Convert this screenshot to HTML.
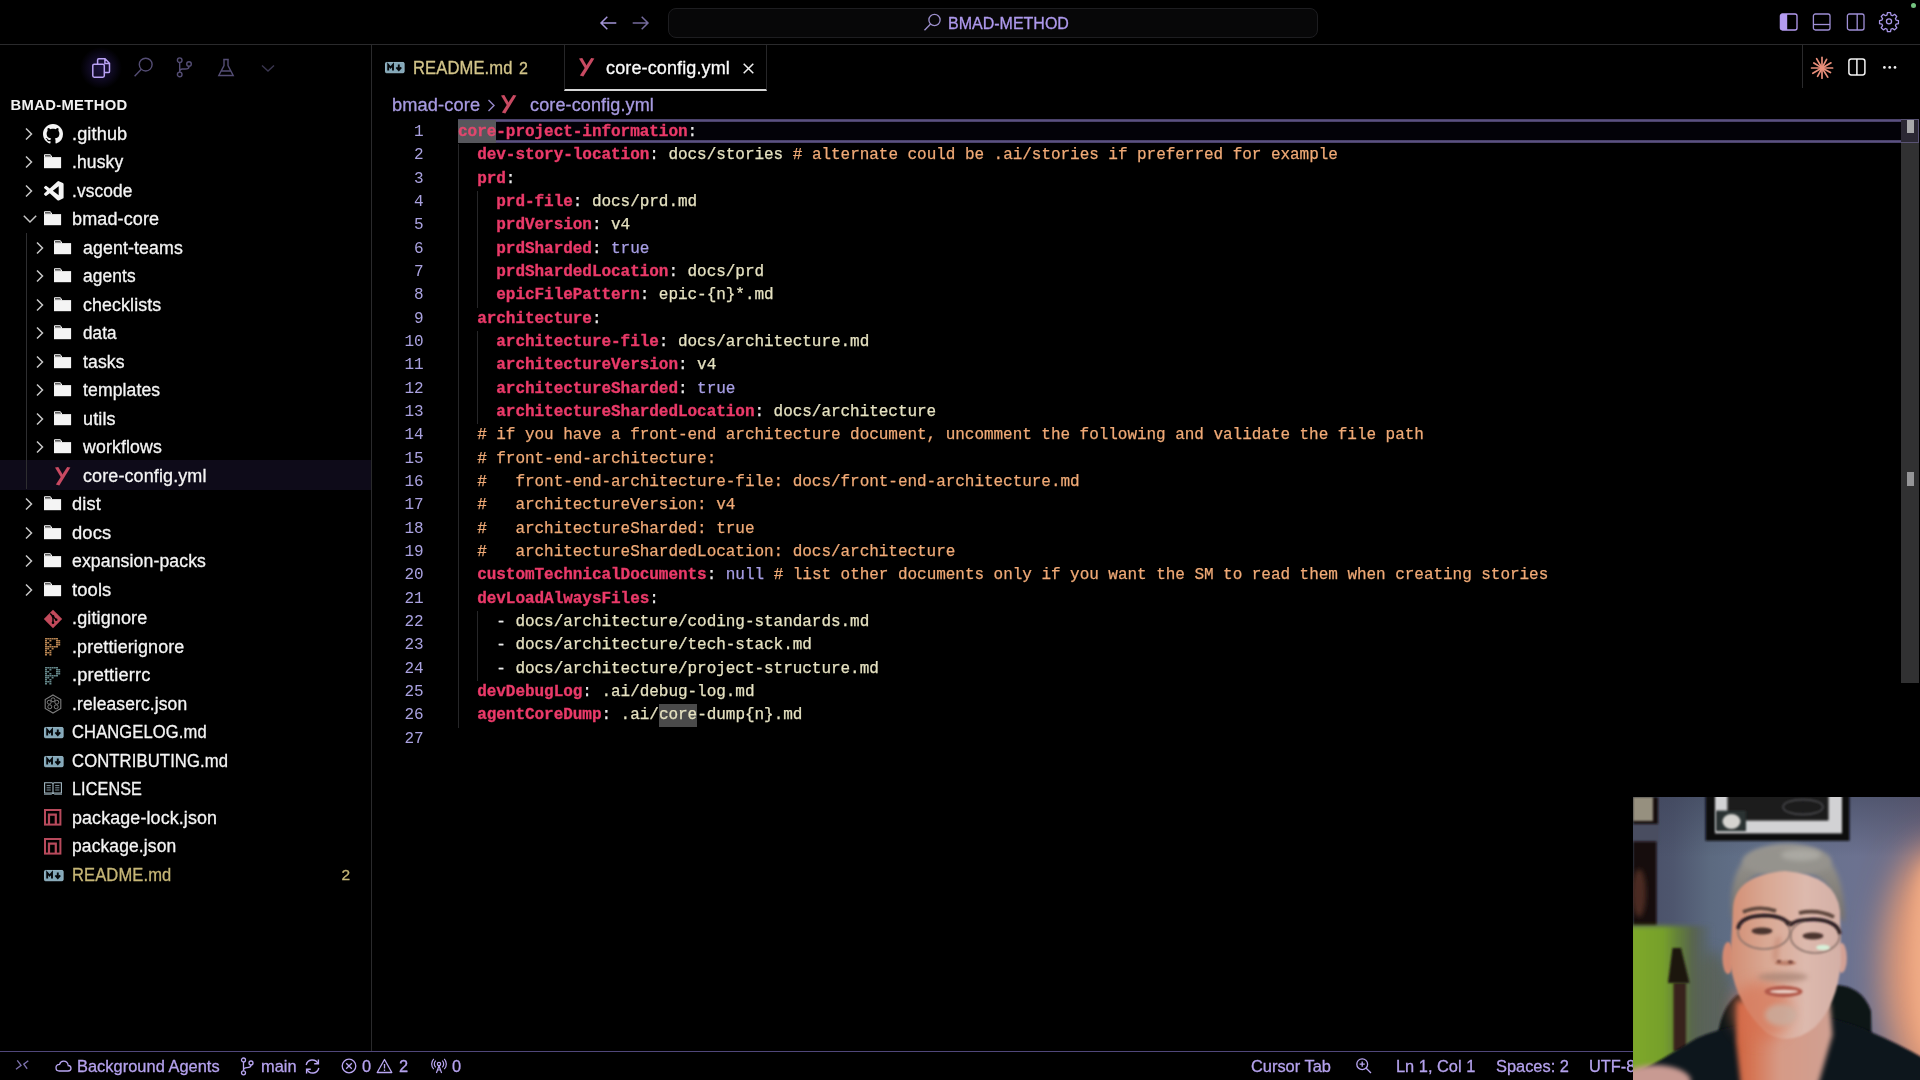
<!DOCTYPE html>
<html>
<head>
<meta charset="utf-8">
<title>core-config.yml - BMAD-METHOD</title>
<style>
*{margin:0;padding:0;box-sizing:border-box}
html,body{width:1920px;height:1080px;overflow:hidden;background:#000;font-family:"Liberation Sans",sans-serif;color:#fff}
.abs{position:absolute}
svg{position:absolute;overflow:visible}
#titlebar{position:absolute;left:0;top:0;width:1920px;height:45px;border-bottom:1px solid #2a2a2c;background:#000}
#search{position:absolute;left:668px;top:8px;width:650px;height:30px;border:1px solid #1d1d20;border-radius:8px;background:#070708}
#search span{position:absolute;left:279px;top:5.8px;font-size:16px;line-height:18px;color:#ae99ec;white-space:nowrap;-webkit-text-stroke:0.3px currentColor}
#sidebar{position:absolute;left:0;top:45px;width:372px;height:1006px;border-right:1px solid #2a2a2c;background:#000}
#sbtitle{position:absolute;left:10.5px;top:52px;font-size:14.8px;line-height:16px;font-weight:bold;color:#f2f2f2;letter-spacing:0.33px;white-space:nowrap}
#tree{position:absolute;left:0;top:0;width:371px;height:0}
.row{position:absolute;left:0;width:371px;height:28.5px;font-size:17.6px;line-height:28.5px;color:#f4f4f4;white-space:nowrap;letter-spacing:0.12px}
.row .lbl{position:absolute;top:0;display:inline-block;transform-origin:0 50%;-webkit-text-stroke:0.3px currentColor}
.row.sel{background:none}
#tabs{position:absolute;left:372px;top:45px;width:1548px;height:46px}
.tab{position:absolute;top:0;height:46px;font-size:17.6px;line-height:47px;white-space:nowrap;letter-spacing:0.12px}
.t{display:inline-block;transform-origin:0 50%;-webkit-text-stroke:0.3px currentColor}
#crumbs{position:absolute;left:372px;top:92px;width:1200px;height:26px;font-size:17.6px;line-height:27px;color:#a79ae0;white-space:nowrap;letter-spacing:0.12px}
#crumbs span{position:absolute;top:0}
#editor{position:absolute;left:372px;top:120.9px;width:1548px;height:932px;font-family:"Liberation Mono",monospace;font-size:16px}
.ln{position:absolute;left:0;width:51.5px;text-align:right;height:23.33px;line-height:23.33px;color:#aaa2e0;font-size:16px;white-space:pre;letter-spacing:-0.04px}
.cl{position:absolute;left:86px;height:23.33px;line-height:23.33px;white-space:pre;color:#e6e2c1;letter-spacing:-0.039px;-webkit-text-stroke:0.25px currentColor}
.cl .k{-webkit-text-stroke:0.35px currentColor}
.k{color:#ea3a69;font-weight:bold}
.p{color:#ececec}
.c{color:#f0aa76}
.b{color:#a79ee4}
.hl{background:#57575c;color:#e2486e;display:inline-block;height:23.2px;margin-top:-1.5px;padding-top:1.5px;vertical-align:top}
.hl2{background:#4a4a4a;display:inline-block;height:23px;vertical-align:top}
#curline{left:86px;top:-1.3px;width:1443px;height:23.3px;border-top:2px solid #564c76;border-bottom:2px solid #564c76;background:#030208}
#status{position:absolute;left:0;top:1051px;width:1920px;height:29px;border-top:1px solid #50477a;background:#000;font-size:16.4px;color:#b5a2ee;line-height:28px;white-space:nowrap;-webkit-text-stroke:0.3px currentColor}
#status span{position:absolute;top:0}
#tree,#editor,#tabs,#crumbs,#status,#titlebar,#sidebar{will-change:transform}
#titlebar,#sidebar,#status{background:transparent}

</style>
</head>
<body>
<div id="titlebar">
<svg style="left:598.6px;top:13.8px" width="18" height="18" viewBox="0 0 18 18"><path d="M17.3 9 H2 M8.3 2.7 L2 9 L8.3 15.3" fill="none" stroke="#a394d8" stroke-width="1.5"/></svg>
<svg style="left:632.4px;top:13.8px" width="18" height="18" viewBox="0 0 18 18"><path d="M0.7 9 H16 M9.7 2.7 L16 9 L9.7 15.3" fill="none" stroke="#746a9c" stroke-width="1.5"/></svg>
<div id="search">
<svg style="left:254px;top:3.4px" width="20" height="20" viewBox="0 0 20 20"><circle cx="11.5" cy="8" r="5.6" fill="none" stroke="#9c8fcc" stroke-width="1.3"/><path d="M7.6 12 L1.5 18.2" stroke="#9c8fcc" stroke-width="1.3"/></svg>
<span>BMAD-METHOD</span></div>
<svg style="left:1779px;top:13px" width="20" height="18" viewBox="0 0 20 18"><rect x="1.4" y="1" width="16.6" height="16" rx="2" fill="none" stroke="#b59cf2" stroke-width="1.3"/><path d="M3 1 H8.2 V17 H3 Q1.4 17 1.4 15.4 V2.6 Q1.4 1 3 1 Z" fill="#b59cf2"/></svg>
<svg style="left:1812px;top:13px" width="20" height="18" viewBox="0 0 20 18"><rect x="1.4" y="1" width="16.6" height="16" rx="2" fill="none" stroke="#9f8fd6" stroke-width="1.3"/><path d="M1.4 11.5 H18" stroke="#9f8fd6" stroke-width="1.3"/></svg>
<svg style="left:1846px;top:13px" width="20" height="18" viewBox="0 0 20 18"><rect x="1.4" y="1" width="16.6" height="16" rx="2" fill="none" stroke="#9f8fd6" stroke-width="1.3"/><path d="M11.2 1 V17" stroke="#9f8fd6" stroke-width="1.3"/></svg>
<svg style="left:1878px;top:11px" width="22" height="22" viewBox="0 0 24 24"><path fill="none" stroke="#a896e6" stroke-width="1.4" stroke-linejoin="round" d="M10.3 2.5h3.4l.5 2.6 1.7.7 2.2-1.5 2.4 2.4-1.5 2.2.7 1.7 2.6.5v3.4l-2.6.5-.7 1.7 1.5 2.2-2.4 2.4-2.2-1.5-1.7.7-.5 2.6h-3.4l-.5-2.6-1.7-.7-2.2 1.5-2.4-2.4 1.5-2.2-.7-1.7-2.6-.5v-3.4l2.6-.5.7-1.7-1.5-2.2 2.4-2.4 2.2 1.5 1.7-.7z" transform="translate(0,-0.7)"/><circle cx="12" cy="11.3" r="2.8" fill="none" stroke="#a896e6" stroke-width="1.4"/></svg>
<div class="abs" style="left:1911.4px;top:3.4px;width:5px;height:5px;border-radius:3px;background:#74c480"></div>

</div>
<div id="sidebar">
<div class="abs" style="left:80px;top:2px;width:42px;height:42px;border-radius:21px;background:radial-gradient(closest-side,#1c1340 0%,#120c28 45%,#06040e 80%,#000 100%)"></div>
<svg style="left:92.3px;top:12.6px" width="18.4" height="20" viewBox="0 0 18.4 20"><path d="M5.6 6 V1.9 Q5.6 0.8 6.7 0.8 H13 L17.5 5.2 V13.4 Q17.5 14.5 16.4 14.5 H12.6 M12.9 1 V5.4 H17.3" fill="none" stroke="#b9a2f5" stroke-width="1.5"/><rect x="0.8" y="6.2" width="11.5" height="13" rx="1.4" fill="none" stroke="#b9a2f5" stroke-width="1.5"/></svg>
<svg style="left:133px;top:12px" width="21" height="21" viewBox="0 0 21 21"><circle cx="12.7" cy="7.6" r="6.4" fill="none" stroke="#544d74" stroke-width="1.4"/><path d="M8.3 12.2 L1.6 19.2" stroke="#544d74" stroke-width="1.4"/></svg>
<svg style="left:176px;top:12.4px" width="17" height="21" viewBox="0 0 17 21"><circle cx="3.7" cy="3.2" r="2.3" fill="none" stroke="#544d74" stroke-width="1.4"/><circle cx="3.7" cy="17.4" r="2.3" fill="none" stroke="#544d74" stroke-width="1.4"/><circle cx="13" cy="7" r="2.3" fill="none" stroke="#544d74" stroke-width="1.4"/><path d="M3.7 5.6 V15 M13 9.4 Q13 12 9.2 12 H6.4 Q3.7 12 3.7 14.6" fill="none" stroke="#544d74" stroke-width="1.4"/></svg>
<svg style="left:217.3px;top:12.8px" width="18" height="20" viewBox="0 0 18 20"><path d="M6.2 1.5 H11.8 M7 1.5 V7.5 L1.8 17.5 H16.2 L11 7.5 V1.5 M4 13 H14" fill="none" stroke="#544d74" stroke-width="1.4"/></svg>
<svg style="left:260.5px;top:18.6px" width="14" height="9" viewBox="0 0 14 9"><path d="M1 1.5 L7 7 L13 1.5" fill="none" stroke="#3a3650" stroke-width="1.4"/></svg>

<div id="sbtitle">BMAD-METHOD</div>
</div>
<div id="tree">
<div class="abs" style="left:0;top:460.4px;width:371px;height:29.2px;background:#0e0b19"></div>
<div class="row" style="top:119.75px"><svg style="left:24.3px;top:6.85px" width="10" height="14" viewBox="0 0 10 14"><path d="M2 1.5 L7.5 7 L2 12.5" fill="none" stroke="#c8c8c8" stroke-width="1.5"/></svg><svg style="left:43.0px;top:4.25px" width="20" height="20" viewBox="0 0 16 16"><path fill="#f4f4f4" d="M8 0C3.58 0 0 3.58 0 8c0 3.54 2.29 6.53 5.47 7.59.4.07.55-.17.55-.38 0-.19-.01-.82-.01-1.49-2.01.37-2.53-.49-2.69-.94-.09-.23-.48-.94-.82-1.13-.28-.15-.68-.52-.01-.53.63-.01 1.08.58 1.23.82.72 1.21 1.87.87 2.33.66.07-.52.28-.87.51-1.07-1.78-.2-3.64-.89-3.64-3.95 0-.87.31-1.59.82-2.15-.08-.2-.36-1.02.08-2.12 0 0 .67-.21 2.2.82.64-.18 1.32-.27 2-.27s1.36.09 2 .27c1.53-1.04 2.2-.82 2.2-.82.44 1.1.16 1.92.08 2.12.51.56.82 1.27.82 2.15 0 3.07-1.87 3.75-3.65 3.95.29.25.54.73.54 1.48 0 1.07-.01 1.93-.01 2.2 0 .21.15.46.55.38A8.01 8.01 0 0 0 16 8c0-4.42-3.58-8-8-8z"/></svg><span class="lbl" style="left:72.3px;transform:scaleX(1.0307)">.github</span></div>
<div class="row" style="top:148.25px"><svg style="left:24.3px;top:6.85px" width="10" height="14" viewBox="0 0 10 14"><path d="M2 1.5 L7.5 7 L2 12.5" fill="none" stroke="#c8c8c8" stroke-width="1.5"/></svg><svg style="left:43.9px;top:5.949999999999999px" width="18" height="15" viewBox="0 0 18 15"><path d="M0.5 3 V0.7 H6.4 L7.8 3 Z" fill="#3a3a3a" stroke="#f4f4f4" stroke-width="1"/><path d="M0 3.1 H17.1 V14.2 H0 Z" fill="#f4f4f4"/></svg><span class="lbl" style="left:72.3px;transform:scaleX(0.9945)">.husky</span></div>
<div class="row" style="top:176.75px"><svg style="left:24.3px;top:6.85px" width="10" height="14" viewBox="0 0 10 14"><path d="M2 1.5 L7.5 7 L2 12.5" fill="none" stroke="#c8c8c8" stroke-width="1.5"/></svg><svg style="left:43.7px;top:4.35px" width="19.6" height="19.6" viewBox="0 0 24 24"><path fill="#f4f4f4" d="M23.15 2.587L18.21.21a1.494 1.494 0 0 0-1.705.29l-9.46 8.63-4.12-3.128a.999.999 0 0 0-1.276.057L.327 7.261A1 1 0 0 0 .326 8.74L3.899 12 .326 15.26a1 1 0 0 0 .001 1.479L1.65 17.94a.999.999 0 0 0 1.276.057l4.12-3.128 9.46 8.63a1.492 1.492 0 0 0 1.704.29l4.942-2.377A1.5 1.5 0 0 0 24 20.06V3.939a1.5 1.5 0 0 0-.85-1.352zm-5.146 14.861L10.826 12l7.178-5.448v10.896z"/></svg><span class="lbl" style="left:72.3px;transform:scaleX(0.9850)">.vscode</span></div>
<div class="row" style="top:205.25px"><svg style="left:22.5px;top:8.65px" width="14" height="10" viewBox="0 0 14 10"><path d="M0.8 1.8 L7 8 L13.2 1.8" fill="none" stroke="#c8c8c8" stroke-width="1.5"/></svg><svg style="left:43.9px;top:5.949999999999999px" width="18" height="15" viewBox="0 0 18 15"><path d="M0.5 3 V0.7 H6.4 L7.8 3 Z" fill="#3a3a3a" stroke="#f4f4f4" stroke-width="1"/><path d="M0 3.1 H17.1 V14.2 H0 Z" fill="#f4f4f4"/></svg><span class="lbl" style="left:72.3px;transform:scaleX(1.0240)">bmad-core</span></div>
<div class="row" style="top:233.75px"><svg style="left:34.8px;top:6.85px" width="10" height="14" viewBox="0 0 10 14"><path d="M2 1.5 L7.5 7 L2 12.5" fill="none" stroke="#c8c8c8" stroke-width="1.5"/></svg><svg style="left:54.4px;top:5.949999999999999px" width="18" height="15" viewBox="0 0 18 15"><path d="M0.5 3 V0.7 H6.4 L7.8 3 Z" fill="#3a3a3a" stroke="#f4f4f4" stroke-width="1"/><path d="M0 3.1 H17.1 V14.2 H0 Z" fill="#f4f4f4"/></svg><span class="lbl" style="left:82.8px;transform:scaleX(1.0082)">agent-teams</span></div>
<div class="row" style="top:262.25px"><svg style="left:34.8px;top:6.85px" width="10" height="14" viewBox="0 0 10 14"><path d="M2 1.5 L7.5 7 L2 12.5" fill="none" stroke="#c8c8c8" stroke-width="1.5"/></svg><svg style="left:54.4px;top:5.949999999999999px" width="18" height="15" viewBox="0 0 18 15"><path d="M0.5 3 V0.7 H6.4 L7.8 3 Z" fill="#3a3a3a" stroke="#f4f4f4" stroke-width="1"/><path d="M0 3.1 H17.1 V14.2 H0 Z" fill="#f4f4f4"/></svg><span class="lbl" style="left:82.8px;transform:scaleX(0.9852)">agents</span></div>
<div class="row" style="top:290.75px"><svg style="left:34.8px;top:6.85px" width="10" height="14" viewBox="0 0 10 14"><path d="M2 1.5 L7.5 7 L2 12.5" fill="none" stroke="#c8c8c8" stroke-width="1.5"/></svg><svg style="left:54.4px;top:5.949999999999999px" width="18" height="15" viewBox="0 0 18 15"><path d="M0.5 3 V0.7 H6.4 L7.8 3 Z" fill="#3a3a3a" stroke="#f4f4f4" stroke-width="1"/><path d="M0 3.1 H17.1 V14.2 H0 Z" fill="#f4f4f4"/></svg><span class="lbl" style="left:82.8px;transform:scaleX(1.0121)">checklists</span></div>
<div class="row" style="top:319.25px"><svg style="left:34.8px;top:6.85px" width="10" height="14" viewBox="0 0 10 14"><path d="M2 1.5 L7.5 7 L2 12.5" fill="none" stroke="#c8c8c8" stroke-width="1.5"/></svg><svg style="left:54.4px;top:5.949999999999999px" width="18" height="15" viewBox="0 0 18 15"><path d="M0.5 3 V0.7 H6.4 L7.8 3 Z" fill="#3a3a3a" stroke="#f4f4f4" stroke-width="1"/><path d="M0 3.1 H17.1 V14.2 H0 Z" fill="#f4f4f4"/></svg><span class="lbl" style="left:82.8px;transform:scaleX(0.9691)">data</span></div>
<div class="row" style="top:347.75px"><svg style="left:34.8px;top:6.85px" width="10" height="14" viewBox="0 0 10 14"><path d="M2 1.5 L7.5 7 L2 12.5" fill="none" stroke="#c8c8c8" stroke-width="1.5"/></svg><svg style="left:54.4px;top:5.949999999999999px" width="18" height="15" viewBox="0 0 18 15"><path d="M0.5 3 V0.7 H6.4 L7.8 3 Z" fill="#3a3a3a" stroke="#f4f4f4" stroke-width="1"/><path d="M0 3.1 H17.1 V14.2 H0 Z" fill="#f4f4f4"/></svg><span class="lbl" style="left:82.8px;transform:scaleX(1.0006)">tasks</span></div>
<div class="row" style="top:376.25px"><svg style="left:34.8px;top:6.85px" width="10" height="14" viewBox="0 0 10 14"><path d="M2 1.5 L7.5 7 L2 12.5" fill="none" stroke="#c8c8c8" stroke-width="1.5"/></svg><svg style="left:54.4px;top:5.949999999999999px" width="18" height="15" viewBox="0 0 18 15"><path d="M0.5 3 V0.7 H6.4 L7.8 3 Z" fill="#3a3a3a" stroke="#f4f4f4" stroke-width="1"/><path d="M0 3.1 H17.1 V14.2 H0 Z" fill="#f4f4f4"/></svg><span class="lbl" style="left:82.8px;transform:scaleX(0.9989)">templates</span></div>
<div class="row" style="top:404.75px"><svg style="left:34.8px;top:6.85px" width="10" height="14" viewBox="0 0 10 14"><path d="M2 1.5 L7.5 7 L2 12.5" fill="none" stroke="#c8c8c8" stroke-width="1.5"/></svg><svg style="left:54.4px;top:5.949999999999999px" width="18" height="15" viewBox="0 0 18 15"><path d="M0.5 3 V0.7 H6.4 L7.8 3 Z" fill="#3a3a3a" stroke="#f4f4f4" stroke-width="1"/><path d="M0 3.1 H17.1 V14.2 H0 Z" fill="#f4f4f4"/></svg><span class="lbl" style="left:82.8px;transform:scaleX(1.0235)">utils</span></div>
<div class="row" style="top:433.25px"><svg style="left:34.8px;top:6.85px" width="10" height="14" viewBox="0 0 10 14"><path d="M2 1.5 L7.5 7 L2 12.5" fill="none" stroke="#c8c8c8" stroke-width="1.5"/></svg><svg style="left:54.4px;top:5.949999999999999px" width="18" height="15" viewBox="0 0 18 15"><path d="M0.5 3 V0.7 H6.4 L7.8 3 Z" fill="#3a3a3a" stroke="#f4f4f4" stroke-width="1"/><path d="M0 3.1 H17.1 V14.2 H0 Z" fill="#f4f4f4"/></svg><span class="lbl" style="left:82.8px;transform:scaleX(1.0080)">workflows</span></div>
<div class="row sel" style="top:461.75px"><svg style="left:54.8px;top:5.65px" width="15.4" height="18.4" viewBox="0 0 15.4 18.4"><path d="M0 0.6 L3.3 0 L8.6 9.2 L6.6 11.6 Z" fill="#c94a62"/><path d="M12.2 0 L15.4 0.5 L4.3 18.4 L0.9 17.6 Z" fill="#c94a62"/></svg><span class="lbl" style="left:82.8px;transform:scaleX(1.0202)">core-config.yml</span></div>
<div class="row" style="top:490.25px"><svg style="left:24.3px;top:6.85px" width="10" height="14" viewBox="0 0 10 14"><path d="M2 1.5 L7.5 7 L2 12.5" fill="none" stroke="#c8c8c8" stroke-width="1.5"/></svg><svg style="left:43.9px;top:5.949999999999999px" width="18" height="15" viewBox="0 0 18 15"><path d="M0.5 3 V0.7 H6.4 L7.8 3 Z" fill="#3a3a3a" stroke="#f4f4f4" stroke-width="1"/><path d="M0 3.1 H17.1 V14.2 H0 Z" fill="#f4f4f4"/></svg><span class="lbl" style="left:72.3px;transform:scaleX(1.0343)">dist</span></div>
<div class="row" style="top:518.75px"><svg style="left:24.3px;top:6.85px" width="10" height="14" viewBox="0 0 10 14"><path d="M2 1.5 L7.5 7 L2 12.5" fill="none" stroke="#c8c8c8" stroke-width="1.5"/></svg><svg style="left:43.9px;top:5.949999999999999px" width="18" height="15" viewBox="0 0 18 15"><path d="M0.5 3 V0.7 H6.4 L7.8 3 Z" fill="#3a3a3a" stroke="#f4f4f4" stroke-width="1"/><path d="M0 3.1 H17.1 V14.2 H0 Z" fill="#f4f4f4"/></svg><span class="lbl" style="left:72.3px;transform:scaleX(1.0443)">docs</span></div>
<div class="row" style="top:547.25px"><svg style="left:24.3px;top:6.85px" width="10" height="14" viewBox="0 0 10 14"><path d="M2 1.5 L7.5 7 L2 12.5" fill="none" stroke="#c8c8c8" stroke-width="1.5"/></svg><svg style="left:43.9px;top:5.949999999999999px" width="18" height="15" viewBox="0 0 18 15"><path d="M0.5 3 V0.7 H6.4 L7.8 3 Z" fill="#3a3a3a" stroke="#f4f4f4" stroke-width="1"/><path d="M0 3.1 H17.1 V14.2 H0 Z" fill="#f4f4f4"/></svg><span class="lbl" style="left:72.3px;transform:scaleX(1.0015)">expansion-packs</span></div>
<div class="row" style="top:575.75px"><svg style="left:24.3px;top:6.85px" width="10" height="14" viewBox="0 0 10 14"><path d="M2 1.5 L7.5 7 L2 12.5" fill="none" stroke="#c8c8c8" stroke-width="1.5"/></svg><svg style="left:43.9px;top:5.949999999999999px" width="18" height="15" viewBox="0 0 18 15"><path d="M0.5 3 V0.7 H6.4 L7.8 3 Z" fill="#3a3a3a" stroke="#f4f4f4" stroke-width="1"/><path d="M0 3.1 H17.1 V14.2 H0 Z" fill="#f4f4f4"/></svg><span class="lbl" style="left:72.3px;transform:scaleX(1.0443)">tools</span></div>
<div class="row" style="top:604.25px"><svg style="left:43.0px;top:4.25px" width="20" height="20" viewBox="0 0 20 20"><path d="M10 0.8 L19.2 10 L10 19.2 L0.8 10 Z" fill="#c24a5b"/><path d="M7.2 4.6 L10 7.4 V13.6 M10 7.6 L13 10.6" stroke="#000" stroke-width="1.4" fill="none"/><circle cx="10" cy="7.4" r="1.3" fill="#000"/><circle cx="10" cy="13.8" r="1.3" fill="#000"/><circle cx="13.2" cy="10.8" r="1.3" fill="#000"/></svg><span class="lbl" style="left:72.3px;transform:scaleX(1.0235)">.gitignore</span></div>
<div class="row" style="top:632.75px"><svg style="left:43.6px;top:4.25px" width="17" height="20" viewBox="0 0 17 20"><rect x="1.0" y="1" width="2" height="1.5" fill="#b98552"/><rect x="3.2" y="1" width="2" height="1.5" fill="#b98552"/><rect x="5.4" y="1" width="2" height="1.5" fill="#b98552"/><rect x="7.6000000000000005" y="1" width="2" height="1.5" fill="#b98552"/><rect x="9.8" y="1" width="2" height="1.5" fill="#b98552"/><rect x="12.0" y="1" width="2" height="1.5" fill="#b98552"/><rect x="1.0" y="3" width="2" height="1.5" fill="#b98552"/><rect x="5.4" y="3" width="2" height="1.5" fill="#b98552"/><rect x="12.0" y="3" width="2" height="1.5" fill="#b98552"/><rect x="14.200000000000001" y="3" width="2" height="1.5" fill="#b98552"/><rect x="1.0" y="5" width="2" height="1.5" fill="#b98552"/><rect x="3.2" y="5" width="2" height="1.5" fill="#b98552"/><rect x="12.0" y="5" width="2" height="1.5" fill="#b98552"/><rect x="14.200000000000001" y="5" width="2" height="1.5" fill="#b98552"/><rect x="1.0" y="7" width="2" height="1.5" fill="#b98552"/><rect x="5.4" y="7" width="2" height="1.5" fill="#b98552"/><rect x="12.0" y="7" width="2" height="1.5" fill="#b98552"/><rect x="14.200000000000001" y="7" width="2" height="1.5" fill="#b98552"/><rect x="1.0" y="9" width="2" height="1.5" fill="#b98552"/><rect x="3.2" y="9" width="2" height="1.5" fill="#b98552"/><rect x="5.4" y="9" width="2" height="1.5" fill="#b98552"/><rect x="7.6000000000000005" y="9" width="2" height="1.5" fill="#b98552"/><rect x="9.8" y="9" width="2" height="1.5" fill="#b98552"/><rect x="12.0" y="9" width="2" height="1.5" fill="#b98552"/><rect x="1.0" y="11" width="2" height="1.5" fill="#b98552"/><rect x="3.2" y="11" width="2" height="1.5" fill="#b98552"/><rect x="7.6000000000000005" y="11" width="2" height="1.5" fill="#b98552"/><rect x="1.0" y="13" width="2" height="1.5" fill="#b98552"/><rect x="5.4" y="13" width="2" height="1.5" fill="#b98552"/><rect x="1.0" y="15" width="2" height="1.5" fill="#b98552"/><rect x="3.2" y="15" width="2" height="1.5" fill="#b98552"/><rect x="5.4" y="15" width="2" height="1.5" fill="#b98552"/><rect x="1.0" y="17" width="2" height="1.5" fill="#b98552"/><rect x="5.4" y="17" width="2" height="1.5" fill="#b98552"/></svg><span class="lbl" style="left:72.3px;transform:scaleX(1.0186)">.prettierignore</span></div>
<div class="row" style="top:661.25px"><svg style="left:43.6px;top:4.25px" width="17" height="20" viewBox="0 0 17 20"><rect x="1.0" y="1" width="2" height="1.5" fill="#64878a"/><rect x="3.2" y="1" width="2" height="1.5" fill="#64878a"/><rect x="5.4" y="1" width="2" height="1.5" fill="#64878a"/><rect x="7.6000000000000005" y="1" width="2" height="1.5" fill="#64878a"/><rect x="9.8" y="1" width="2" height="1.5" fill="#64878a"/><rect x="12.0" y="1" width="2" height="1.5" fill="#64878a"/><rect x="1.0" y="3" width="2" height="1.5" fill="#64878a"/><rect x="5.4" y="3" width="2" height="1.5" fill="#64878a"/><rect x="12.0" y="3" width="2" height="1.5" fill="#64878a"/><rect x="14.200000000000001" y="3" width="2" height="1.5" fill="#64878a"/><rect x="1.0" y="5" width="2" height="1.5" fill="#64878a"/><rect x="3.2" y="5" width="2" height="1.5" fill="#64878a"/><rect x="12.0" y="5" width="2" height="1.5" fill="#64878a"/><rect x="14.200000000000001" y="5" width="2" height="1.5" fill="#64878a"/><rect x="1.0" y="7" width="2" height="1.5" fill="#64878a"/><rect x="5.4" y="7" width="2" height="1.5" fill="#64878a"/><rect x="12.0" y="7" width="2" height="1.5" fill="#64878a"/><rect x="14.200000000000001" y="7" width="2" height="1.5" fill="#64878a"/><rect x="1.0" y="9" width="2" height="1.5" fill="#64878a"/><rect x="3.2" y="9" width="2" height="1.5" fill="#64878a"/><rect x="5.4" y="9" width="2" height="1.5" fill="#64878a"/><rect x="7.6000000000000005" y="9" width="2" height="1.5" fill="#64878a"/><rect x="9.8" y="9" width="2" height="1.5" fill="#64878a"/><rect x="12.0" y="9" width="2" height="1.5" fill="#64878a"/><rect x="1.0" y="11" width="2" height="1.5" fill="#64878a"/><rect x="3.2" y="11" width="2" height="1.5" fill="#64878a"/><rect x="7.6000000000000005" y="11" width="2" height="1.5" fill="#64878a"/><rect x="1.0" y="13" width="2" height="1.5" fill="#64878a"/><rect x="5.4" y="13" width="2" height="1.5" fill="#64878a"/><rect x="1.0" y="15" width="2" height="1.5" fill="#64878a"/><rect x="3.2" y="15" width="2" height="1.5" fill="#64878a"/><rect x="5.4" y="15" width="2" height="1.5" fill="#64878a"/><rect x="1.0" y="17" width="2" height="1.5" fill="#64878a"/><rect x="5.4" y="17" width="2" height="1.5" fill="#64878a"/></svg><span class="lbl" style="left:72.3px;transform:scaleX(1.0363)">.prettierrc</span></div>
<div class="row" style="top:689.75px"><svg style="left:43.0px;top:4.25px" width="20" height="20" viewBox="0 0 20 20"><path d="M10 1 L17.8 5.5 V14.5 L10 19 L2.2 14.5 V5.5 Z" fill="none" stroke="#7e7e7e" stroke-width="1.1"/><circle cx="10" cy="5.8" r="2" fill="none" stroke="#7e7e7e" stroke-width="1"/><circle cx="13.8" cy="8.2" r="2" fill="none" stroke="#7e7e7e" stroke-width="1"/><circle cx="13.2" cy="12.8" r="2" fill="none" stroke="#7e7e7e" stroke-width="1"/><circle cx="6.8" cy="12.8" r="2" fill="none" stroke="#7e7e7e" stroke-width="1"/><circle cx="6.2" cy="8.2" r="2" fill="none" stroke="#7e7e7e" stroke-width="1"/></svg><span class="lbl" style="left:72.3px;transform:scaleX(0.9913)">.releaserc.json</span></div>
<div class="row" style="top:718.25px"><svg style="left:43.8px;top:9.05px" width="19.6" height="11.2" viewBox="0 0 19.6 12" preserveAspectRatio="none"><rect x="0.5" y="0.5" width="18.6" height="11" rx="1" fill="#83a7b8" stroke="#98bac9" stroke-width="1"/><path d="M3.2 9.2 V3 L5.6 6 L8 3 V9.2" fill="none" stroke="#04070a" stroke-width="1.9"/><path d="M13.8 2.8 V8 M11.4 5.8 L13.8 8.8 L16.2 5.8" fill="none" stroke="#04070a" stroke-width="1.9"/></svg><span class="lbl" style="left:72.3px;transform:scaleX(0.9408)">CHANGELOG.md</span></div>
<div class="row" style="top:746.75px"><svg style="left:43.8px;top:9.05px" width="19.6" height="11.2" viewBox="0 0 19.6 12" preserveAspectRatio="none"><rect x="0.5" y="0.5" width="18.6" height="11" rx="1" fill="#83a7b8" stroke="#98bac9" stroke-width="1"/><path d="M3.2 9.2 V3 L5.6 6 L8 3 V9.2" fill="none" stroke="#04070a" stroke-width="1.9"/><path d="M13.8 2.8 V8 M11.4 5.8 L13.8 8.8 L16.2 5.8" fill="none" stroke="#04070a" stroke-width="1.9"/></svg><span class="lbl" style="left:72.3px;transform:scaleX(0.9463)">CONTRIBUTING.md</span></div>
<div class="row" style="top:775.25px"><svg style="left:44.0px;top:7.05px" width="18" height="13" viewBox="0 0 18 13"><path d="M0.6 0.8 H7.6 Q9 0.8 9 2 V11 H0.6 Z M17.4 0.8 H10.4 Q9 0.8 9 2 V11 H17.4 Z" fill="none" stroke="#a3b9c4" stroke-width="1.1"/><path d="M2.6 3.6 H6.8 M2.6 5.8 H6.8 M2.6 8 H6.8 M11.2 3.6 H15.4 M11.2 5.8 H15.4 M11.2 8 H15.4" stroke="#8fa6b2" stroke-width="0.9"/><path d="M0 12.2 H7.4 L9 11.2 L10.6 12.2 H18" fill="none" stroke="#a3b9c4" stroke-width="0.9"/></svg><span class="lbl" style="left:72.3px;transform:scaleX(0.9197)">LICENSE</span></div>
<div class="row" style="top:803.75px"><svg style="left:44.0px;top:5.65px" width="17.4" height="16.6" viewBox="0 0 17.4 16.6"><rect x="1" y="1" width="15.4" height="14.6" fill="none" stroke="#b84a5c" stroke-width="2"/><path d="M5 15 V5.6 H11.8 V15" fill="none" stroke="#b84a5c" stroke-width="2.2"/></svg><span class="lbl" style="left:72.3px;transform:scaleX(1.0157)">package-lock.json</span></div>
<div class="row" style="top:832.25px"><svg style="left:44.0px;top:5.65px" width="17.4" height="16.6" viewBox="0 0 17.4 16.6"><rect x="1" y="1" width="15.4" height="14.6" fill="none" stroke="#b84a5c" stroke-width="2"/><path d="M5 15 V5.6 H11.8 V15" fill="none" stroke="#b84a5c" stroke-width="2.2"/></svg><span class="lbl" style="left:72.3px;transform:scaleX(0.9923)">package.json</span></div>
<div class="row" style="top:860.75px"><svg style="left:43.8px;top:9.05px" width="19.6" height="11.2" viewBox="0 0 19.6 12" preserveAspectRatio="none"><rect x="0.5" y="0.5" width="18.6" height="11" rx="1" fill="#83a7b8" stroke="#98bac9" stroke-width="1"/><path d="M3.2 9.2 V3 L5.6 6 L8 3 V9.2" fill="none" stroke="#04070a" stroke-width="1.9"/><path d="M13.8 2.8 V8 M11.4 5.8 L13.8 8.8 L16.2 5.8" fill="none" stroke="#04070a" stroke-width="1.9"/></svg><span class="lbl" style="left:72.3px;transform:scaleX(0.9399);color:#c6b676">README.md</span><span class="lbl" style="left:341.5px;color:#c6b676;font-size:15.5px">2</span></div>
<div class="abs" style="left:26px;top:233px;width:1px;height:256px;background:#2e2e30"></div>
</div>
<div id="tabs">
<div class="tab" style="left:0;width:193px">
<svg style="left:12.7px;top:16.8px" width="19.6" height="11.2" viewBox="0 0 19.6 12" preserveAspectRatio="none"><rect x="0.5" y="0.5" width="18.6" height="11" rx="1" fill="#83a7b8" stroke="#98bac9" stroke-width="1"/><path d="M3.2 9.2 V3 L5.6 6 L8 3 V9.2" fill="none" stroke="#04070a" stroke-width="1.9"/><path d="M13.8 2.8 V8 M11.4 5.8 L13.8 8.8 L16.2 5.8" fill="none" stroke="#04070a" stroke-width="1.9"/></svg>
<span class="abs t" style="left:41.2px;top:0;color:#d3c58a;transform:scaleX(0.942)">README.md</span><span class="abs t" style="left:147px;top:0;color:#d3c58a;font-size:16px">2</span>
</div>
<div class="tab" style="left:192px;width:203px;border:1px solid #262628;border-bottom:2px solid #d6d6d6;border-top:none">
<svg style="left:13.8px;top:12.8px" width="15.4" height="18.4" viewBox="0 0 15.4 18.4"><path d="M0 0.6 L3.3 0 L8.6 9.2 L6.6 11.6 Z" fill="#c94a62"/><path d="M12.2 0 L15.4 0.5 L4.3 18.4 L0.9 17.6 Z" fill="#c94a62"/></svg>
<span class="abs t" style="left:41.3px;top:0;color:#fafafa;transform:scaleX(1.024)">core-config.yml</span>
<svg style="left:178px;top:17.5px" width="11" height="11" viewBox="0 0 11 11"><path d="M0.7 0.7 L10.3 10.3 M10.3 0.7 L0.7 10.3" stroke="#f0f0f0" stroke-width="1.5"/></svg>
</div>
<div class="abs" style="left:1430px;top:0;width:1px;height:43px;background:#2a2a2c"></div>
<svg style="left:1438.3px;top:11.3px" width="24" height="24" viewBox="-12 -12 24 24"><g stroke="#e98f7b" stroke-width="1.7" stroke-linecap="round">
<path d="M1.20 0.00 L10.60 0.00"/><path d="M1.06 0.56 L8.48 4.51"/><path d="M0.64 1.02 L5.72 9.16"/><path d="M0.00 1.20 L0.00 10.20"/><path d="M-0.56 1.06 L-4.41 8.30"/><path d="M-1.04 0.60 L-9.18 5.30"/><path d="M-1.20 0.00 L-10.40 0.00"/><path d="M-1.02 -0.64 L-8.14 -5.09"/><path d="M-0.60 -1.04 L-5.40 -9.35"/><path d="M-0.00 -1.20 L-0.00 -10.60"/><path d="M0.56 -1.06 L4.60 -8.65"/><path d="M1.04 -0.60 L9.01 -5.20"/></g><circle cx="0" cy="0" r="2.2" fill="#e98f7b"/></svg>
<svg style="left:1476px;top:13.3px" width="18" height="18" viewBox="0 0 18 18"><rect x="0.9" y="0.9" width="16" height="16" rx="2.4" fill="none" stroke="#f4f4f4" stroke-width="1.5"/><path d="M8.9 1 V17" stroke="#f4f4f4" stroke-width="1.5"/></svg>
<svg style="left:1510.7px;top:21.4px" width="14" height="3" viewBox="0 0 14 3"><circle cx="1.4" cy="1.4" r="1.35" fill="#f0f0f0"/><circle cx="6.7" cy="1.4" r="1.35" fill="#f0f0f0"/><circle cx="12" cy="1.4" r="1.35" fill="#f0f0f0"/></svg>

</div>
<div id="crumbs">
<span class="t" style="left:20.3px;transform:scaleX(1.036)">bmad-core</span>
<svg style="left:115.3px;top:7px" width="9" height="13" viewBox="0 0 9 13"><path d="M1.5 1 L7 6.5 L1.5 12" fill="none" stroke="#9488c8" stroke-width="1.4"/></svg>
<svg style="left:128.5px;top:3.4000000000000004px" width="15.4" height="18.4" viewBox="0 0 15.4 18.4"><path d="M0 0.6 L3.3 0 L8.6 9.2 L6.6 11.6 Z" fill="#c94a62"/><path d="M12.2 0 L15.4 0.5 L4.3 18.4 L0.9 17.6 Z" fill="#c94a62"/></svg>
<span class="t" style="left:157.5px;transform:scaleX(1.024)">core-config.yml</span>

</div>
<div class="abs" style="left:458px;top:119px;width:1443px;height:24px;background:#030208"></div>
<div class="abs" style="left:458px;top:119px;width:1443px;height:3px;background:linear-gradient(#3b3454,#5b5182 34%,#5b5182 66%,#3b3454)"></div>
<div class="abs" style="left:458px;top:140px;width:1443px;height:3px;background:linear-gradient(#3b3454,#5b5182 34%,#5b5182 66%,#3b3454)"></div>
<div id="editor">
<div class="ln" style="top:0.00px">1</div><div class="cl" style="top:0.00px"><span class="hl k">core</span><span class="k">-project-information</span><span class="p">:</span></div>
<div class="ln" style="top:23.33px">2</div><div class="cl" style="top:23.33px">  <span class="k">dev-story-location</span><span class="p">:</span> docs/stories<span class="c"> # alternate could be .ai/stories if preferred for example</span></div>
<div class="ln" style="top:46.66px">3</div><div class="cl" style="top:46.66px">  <span class="k">prd</span><span class="p">:</span></div>
<div class="ln" style="top:69.99px">4</div><div class="cl" style="top:69.99px">    <span class="k">prd-file</span><span class="p">:</span> docs/prd.md</div>
<div class="ln" style="top:93.32px">5</div><div class="cl" style="top:93.32px">    <span class="k">prdVersion</span><span class="p">:</span> v4</div>
<div class="ln" style="top:116.65px">6</div><div class="cl" style="top:116.65px">    <span class="k">prdSharded</span><span class="p">:</span><span class="b"> true</span></div>
<div class="ln" style="top:139.98px">7</div><div class="cl" style="top:139.98px">    <span class="k">prdShardedLocation</span><span class="p">:</span> docs/prd</div>
<div class="ln" style="top:163.31px">8</div><div class="cl" style="top:163.31px">    <span class="k">epicFilePattern</span><span class="p">:</span> epic-{n}*.md</div>
<div class="ln" style="top:186.64px">9</div><div class="cl" style="top:186.64px">  <span class="k">architecture</span><span class="p">:</span></div>
<div class="ln" style="top:209.97px">10</div><div class="cl" style="top:209.97px">    <span class="k">architecture-file</span><span class="p">:</span> docs/architecture.md</div>
<div class="ln" style="top:233.30px">11</div><div class="cl" style="top:233.30px">    <span class="k">architectureVersion</span><span class="p">:</span> v4</div>
<div class="ln" style="top:256.63px">12</div><div class="cl" style="top:256.63px">    <span class="k">architectureSharded</span><span class="p">:</span><span class="b"> true</span></div>
<div class="ln" style="top:279.96px">13</div><div class="cl" style="top:279.96px">    <span class="k">architectureShardedLocation</span><span class="p">:</span> docs/architecture</div>
<div class="ln" style="top:303.29px">14</div><div class="cl" style="top:303.29px">  <span class="c"># if you have a front-end architecture document, uncomment the following and validate the file path</span></div>
<div class="ln" style="top:326.62px">15</div><div class="cl" style="top:326.62px">  <span class="c"># front-end-architecture:</span></div>
<div class="ln" style="top:349.95px">16</div><div class="cl" style="top:349.95px">  <span class="c">#   front-end-architecture-file: docs/front-end-architecture.md</span></div>
<div class="ln" style="top:373.28px">17</div><div class="cl" style="top:373.28px">  <span class="c">#   architectureVersion: v4</span></div>
<div class="ln" style="top:396.61px">18</div><div class="cl" style="top:396.61px">  <span class="c">#   architectureSharded: true</span></div>
<div class="ln" style="top:419.94px">19</div><div class="cl" style="top:419.94px">  <span class="c">#   architectureShardedLocation: docs/architecture</span></div>
<div class="ln" style="top:443.27px">20</div><div class="cl" style="top:443.27px">  <span class="k">customTechnicalDocuments</span><span class="p">:</span><span class="b"> null</span><span class="c"> # list other documents only if you want the SM to read them when creating stories</span></div>
<div class="ln" style="top:466.60px">21</div><div class="cl" style="top:466.60px">  <span class="k">devLoadAlwaysFiles</span><span class="p">:</span></div>
<div class="ln" style="top:489.93px">22</div><div class="cl" style="top:489.93px">    <span class="p">-</span> docs/architecture/coding-standards.md</div>
<div class="ln" style="top:513.26px">23</div><div class="cl" style="top:513.26px">    <span class="p">-</span> docs/architecture/tech-stack.md</div>
<div class="ln" style="top:536.59px">24</div><div class="cl" style="top:536.59px">    <span class="p">-</span> docs/architecture/project-structure.md</div>
<div class="ln" style="top:559.92px">25</div><div class="cl" style="top:559.92px">  <span class="k">devDebugLog</span><span class="p">:</span> .ai/debug-log.md</div>
<div class="ln" style="top:583.25px">26</div><div class="cl" style="top:583.25px">  <span class="k">agentCoreDump</span><span class="p">:</span> .ai/<span class="hl2">core</span>-dump{n}.md</div>
<div class="ln" style="top:606.58px">27</div><div class="cl" style="top:606.58px"></div>
<div class="abs" style="left:86px;top:23.33px;width:1px;height:583.25px;background:#262628"></div>
<div class="abs" style="left:105px;top:69.99px;width:1px;height:116.65px;background:#262628"></div>
<div class="abs" style="left:105px;top:209.97px;width:1px;height:93.32px;background:#262628"></div>
<div class="abs" style="left:105px;top:489.93px;width:1px;height:69.99px;background:#262628"></div>
</div>
<div class="abs" style="left:1901px;top:119.3px;width:18.4px;height:563.5px;background:#313132"></div>
<div class="abs" style="left:1901px;top:119.4px;width:18.2px;height:23.5px;border:1.5px solid #595373;border-left:none;background:#2b2834"></div>
<div class="abs" style="left:1907px;top:119.8px;width:7.1px;height:12.8px;background:#a9a9ab"></div>
<div class="abs" style="left:1907px;top:472px;width:7.2px;height:13.8px;background:#969698"></div>

<div id="status">
<svg style="left:15px;top:7px" width="14" height="14" viewBox="0 0 14 14"><path d="M1.5 2 L6 6.5 L1.5 11 M12.5 1 L8.5 5 L12.5 9" fill="none" stroke="#7d72ad" stroke-width="1.3" transform="rotate(8 7 7)"/></svg>
<svg style="left:55px;top:8px" width="17" height="12" viewBox="0 0 17 12"><path d="M4.2 11 H13 Q16 11 16 8.2 Q16 5.6 13.2 5.5 Q12.6 1.2 8.6 1.2 Q5.4 1.2 4.6 4.4 Q1 4.6 1 7.8 Q1 11 4.2 11 Z" fill="none" stroke="#b9a6f2" stroke-width="1.3"/></svg>
<span style="left:77px;letter-spacing:0.03px">Background Agents</span>
<svg style="left:240px;top:5px" width="14" height="19" viewBox="0 0 14 19"><circle cx="3.5" cy="3" r="2" fill="none" stroke="#b9a6f2" stroke-width="1.3"/><circle cx="3.5" cy="15.8" r="2" fill="none" stroke="#b9a6f2" stroke-width="1.3"/><circle cx="11" cy="6" r="2" fill="none" stroke="#b9a6f2" stroke-width="1.3"/><path d="M3.5 5 V13.8 M11 8 Q11 10.6 7 10.6 Q3.5 10.6 3.5 13.5" fill="none" stroke="#b9a6f2" stroke-width="1.3"/></svg>
<span style="left:261px">main</span>
<svg style="left:304px;top:6px" width="17" height="17" viewBox="0 0 17 17"><path d="M2.2 7 A6.3 6.3 0 0 1 14 5.5 M14.8 10 A6.3 6.3 0 0 1 3 11.5" fill="none" stroke="#b9a6f2" stroke-width="1.4"/><path d="M14.4 1.6 V5.8 H10.2 M2.6 15.4 V11.2 H6.8" fill="none" stroke="#b9a6f2" stroke-width="1.4"/></svg>
<svg style="left:341px;top:6px" width="16" height="16" viewBox="0 0 16 16"><circle cx="8" cy="8" r="6.8" fill="none" stroke="#b9a6f2" stroke-width="1.3"/><path d="M5.2 5.2 L10.8 10.8 M10.8 5.2 L5.2 10.8" stroke="#b9a6f2" stroke-width="1.3"/></svg>
<span style="left:362px">0</span>
<svg style="left:376px;top:6px" width="17" height="16" viewBox="0 0 17 16"><path d="M8.5 1.5 L15.8 14.5 H1.2 Z" fill="none" stroke="#b9a6f2" stroke-width="1.3" stroke-linejoin="round"/><path d="M8.5 6 V10.4 M8.5 11.6 V13" stroke="#b9a6f2" stroke-width="1.3"/></svg>
<span style="left:399px">2</span>
<svg style="left:431px;top:6px" width="16" height="16" viewBox="0 0 16 16"><circle cx="8" cy="6" r="1.7" fill="none" stroke="#b9a6f2" stroke-width="1.2"/><path d="M8 7.8 L5.4 15 M8 7.8 L10.6 15 M6.3 12 H9.7 M4.8 9.4 A4.6 4.6 0 0 1 4.8 2.6 M11.2 9.4 A4.6 4.6 0 0 0 11.2 2.6 M2.8 11.2 A7.4 7.4 0 0 1 2.8 0.8 M13.2 11.2 A7.4 7.4 0 0 0 13.2 0.8" fill="none" stroke="#b9a6f2" stroke-width="1.2"/></svg>
<span style="left:452px">0</span>
<span style="left:1251px">Cursor Tab</span>
<svg style="left:1355px;top:5px" width="18" height="18" viewBox="0 0 18 18"><circle cx="7.2" cy="7.2" r="5.4" fill="none" stroke="#b9a6f2" stroke-width="1.3"/><path d="M11.2 11.2 L16 16 M4.6 7.2 H9.8 M7.2 4.6 V9.8" fill="none" stroke="#b9a6f2" stroke-width="1.3"/></svg>
<span style="left:1396px">Ln 1, Col 1</span>
<span style="left:1496px">Spaces: 2</span>
<span style="left:1589px">UTF-8</span>

</div>
<div id="cam" class="abs" style="left:1633px;top:797px;width:287px;height:283px;overflow:hidden;background:#586478">
<svg style="left:0;top:0;overflow:hidden" width="287" height="283" viewBox="0 0 287 283">
<defs>
<filter id="f1" filterUnits="userSpaceOnUse" x="-40" y="-40" width="370" height="370"><feGaussianBlur stdDeviation="1.1"/></filter>
<filter id="f2" filterUnits="userSpaceOnUse" x="-40" y="-40" width="370" height="370"><feGaussianBlur stdDeviation="2.6"/></filter>
<filter id="f3" filterUnits="userSpaceOnUse" x="-40" y="-40" width="370" height="370"><feGaussianBlur stdDeviation="7"/></filter>
<filter id="f4" filterUnits="userSpaceOnUse" x="-40" y="-40" width="370" height="370"><feGaussianBlur stdDeviation="16"/></filter>
<linearGradient id="wall" x1="0" y1="0" x2="287" y2="0" gradientUnits="userSpaceOnUse">
<stop offset="0" stop-color="#484e66"/><stop offset="0.14" stop-color="#4e566e"/><stop offset="0.27" stop-color="#5c6a80"/><stop offset="0.45" stop-color="#64728c"/><stop offset="0.62" stop-color="#68728e"/><stop offset="0.78" stop-color="#6c7290"/><stop offset="0.9" stop-color="#6c6e8a"/><stop offset="1" stop-color="#706a84"/>
</linearGradient>
<linearGradient id="topsh" x1="0" y1="0" x2="0" y2="60" gradientUnits="userSpaceOnUse"><stop offset="0" stop-color="#3c4258" stop-opacity="0.55"/><stop offset="1" stop-color="#3c4258" stop-opacity="0"/></linearGradient>
<linearGradient id="green" x1="0" y1="0" x2="80" y2="0" gradientUnits="userSpaceOnUse">
<stop offset="0" stop-color="#7ea82b"/><stop offset="0.38" stop-color="#76a02b"/><stop offset="0.55" stop-color="#648238"/><stop offset="0.75" stop-color="#58644e"/><stop offset="1" stop-color="#586258" stop-opacity="0"/>
</linearGradient>
<linearGradient id="faceg" x1="97" y1="0" x2="213" y2="0" gradientUnits="userSpaceOnUse">
<stop offset="0" stop-color="#d38e74"/><stop offset="0.3" stop-color="#d9a792"/><stop offset="0.65" stop-color="#ddb9ad"/><stop offset="1" stop-color="#d2aea5"/>
</linearGradient>
<linearGradient id="neckg" x1="104" y1="0" x2="198" y2="0" gradientUnits="userSpaceOnUse">
<stop offset="0" stop-color="#cf6440"/><stop offset="0.2" stop-color="#d67a5a"/><stop offset="0.45" stop-color="#d69a86"/><stop offset="1" stop-color="#d0a092"/>
</linearGradient>
<linearGradient id="hairg" x1="0" y1="46" x2="0" y2="120" gradientUnits="userSpaceOnUse">
<stop offset="0" stop-color="#a09e98"/><stop offset="0.45" stop-color="#8b8882"/><stop offset="1" stop-color="#79736d"/>
</linearGradient>
</defs>
<rect x="0" y="0" width="287" height="283" fill="url(#wall)"/>
<rect x="0" y="0" width="287" height="60" fill="url(#topsh)"/>
<!-- orange lamp glow at right -->
<ellipse cx="304" cy="172" rx="54" ry="125" fill="#e59c78" filter="url(#f4)"/>
<ellipse cx="297" cy="160" rx="18" ry="95" fill="#f0ac86" filter="url(#f3)"/>
<!-- olive-grey wall between green and face -->
<ellipse cx="78" cy="210" rx="22" ry="56" fill="#5a6258" opacity="0.9" filter="url(#f3)"/>
<!-- left column -->
<rect x="0" y="24" width="26" height="22" fill="#484e60" filter="url(#f1)"/>
<rect x="0" y="0" width="25" height="27" fill="#121110" filter="url(#f1)"/>
<rect x="0" y="0" width="20" height="24" fill="#96907f" filter="url(#f1)"/>
<rect x="0" y="44.5" width="23.5" height="84" fill="#130d0c" filter="url(#f1)"/>
<ellipse cx="6" cy="96" rx="7" ry="24" fill="#4c2c20" filter="url(#f2)"/>
<!-- green wall -->
<rect x="-4" y="129" width="84" height="160" fill="url(#green)" filter="url(#f2)"/>
<!-- guitar -->
<rect x="40.5" y="186" width="12.5" height="68" fill="#38231a" filter="url(#f1)"/>
<path d="M39.5 151 H48 L56.5 186 H35 Z" fill="#1f150f" filter="url(#f1)"/>
<!-- top picture frame -->
<rect x="72.5" y="-4" width="144" height="47.8" fill="#0c0c0e" filter="url(#f1)"/>
<rect x="82" y="-4" width="127" height="40.4" fill="#d2d2d4" filter="url(#f1)"/>
<rect x="94.5" y="-4" width="101" height="27.5" fill="#1a1a1c" filter="url(#f1)"/>
<rect x="83" y="13.6" width="30" height="20.6" fill="#2c3032" filter="url(#f1)"/>
<ellipse cx="98.5" cy="24.5" rx="9" ry="7.6" fill="#d6d4d0" filter="url(#f1)"/>
<ellipse cx="170" cy="10" rx="20" ry="7.5" fill="none" stroke="#505054" stroke-width="1.3" filter="url(#f1)"/>
<!-- chair -->
<path d="M84 262 Q82 216 104 198 L196 188 Q228 186 238 214 L239 262 Z" fill="#111216" filter="url(#f1)"/>
<!-- shirt -->
<path d="M-4 281 Q30 262 64 241 Q88 231 106 229 L196 221 Q224 228 240 236 Q264 246 292 262 V290 H-4 Z" fill="#0e121d" filter="url(#f1)"/>
<!-- neck -->
<path d="M104 205 L197 205 L199.5 238 L184 292 L108 292 L103 245 Z" fill="url(#neckg)" filter="url(#f2)"/>
<!-- hair -->
<path d="M99 122 Q94 70 122 54 Q150 42 182 52 Q212 66 212 126 L204 118 Q200 84 176 76 Q150 70 124 78 Q106 88 106 118 Z" fill="url(#hairg)" filter="url(#f2)"/>
<ellipse cx="154" cy="64" rx="44" ry="15" fill="#95938d" filter="url(#f2)"/>
<ellipse cx="168" cy="58" rx="20" ry="6" fill="#b4b2ac" opacity="0.7" filter="url(#f2)"/>
<!-- ears -->
<ellipse cx="95" cy="161" rx="5.6" ry="16" fill="#d48a72" filter="url(#f1)"/>
<ellipse cx="208.5" cy="161" rx="5.4" ry="15" fill="#d2a094" filter="url(#f1)"/>
<!-- face -->
<path d="M100 112 Q101 78 152 74 Q203 78 207 114 L208 166 Q204 208 182 230 Q158 250 134 236 Q104 210 97 166 Z" fill="url(#faceg)" filter="url(#f1)"/>
<!-- lower-left warm orange -->
<ellipse cx="128" cy="214" rx="30" ry="30" fill="#d87050" opacity="0.6" filter="url(#f3)"/>
<!-- goatee / moustache -->
<ellipse cx="150" cy="180" rx="25" ry="4.6" fill="#a88474" opacity="0.75" filter="url(#f2)"/>
<ellipse cx="148" cy="218" rx="16" ry="11" fill="#c8b0a2" opacity="0.75" filter="url(#f2)"/>
<!-- mouth -->
<ellipse cx="150.5" cy="194.5" rx="19" ry="5.8" fill="#b25a4c" filter="url(#f1)"/>
<ellipse cx="151" cy="194.5" rx="14" ry="1.8" fill="#ecd4ca" filter="url(#f1)"/>
<!-- nose -->
<ellipse cx="152.5" cy="166" rx="11" ry="2.6" fill="#b4705a" opacity="0.7" filter="url(#f1)"/>
<!-- eyebrows/eyes -->
<path d="M110 115 Q126 108 143 114" stroke="#5c443a" stroke-width="3.6" fill="none" filter="url(#f1)"/>
<path d="M166 116 Q185 112 201 120" stroke="#5c443a" stroke-width="3.6" fill="none" filter="url(#f1)"/>
<ellipse cx="129" cy="134" rx="10.5" ry="3.4" fill="#4c342e" filter="url(#f1)"/>
<ellipse cx="180" cy="139" rx="10.5" ry="3.4" fill="#4c342e" filter="url(#f1)"/>
<!-- glasses -->
<ellipse cx="131" cy="135" rx="26" ry="17" fill="none" stroke="#8a726a" stroke-width="1.6" filter="url(#f1)"/>
<ellipse cx="182" cy="139" rx="24.5" ry="17" fill="none" stroke="#8a726a" stroke-width="1.6" filter="url(#f1)"/>
<path d="M105 132 Q106 119.5 131 118.5 Q153 119 156 128" stroke="#2a1e20" stroke-width="3.4" fill="none" filter="url(#f1)"/>
<path d="M157 129 Q161 122 182 122.5 Q205 124 207 137" stroke="#2a1e20" stroke-width="3.4" fill="none" filter="url(#f1)"/>
<path d="M153 126 Q156.5 124 160 127" stroke="#3a2a28" stroke-width="2" fill="none" filter="url(#f1)"/>
<ellipse cx="190" cy="150.5" rx="7" ry="2.8" fill="#d6f0d8" filter="url(#f1)"/>
<!-- nose side shadow + nostrils -->
<path d="M146 140 Q141 156 143 164" stroke="#c07e68" stroke-width="4" fill="none" opacity="0.7" filter="url(#f2)"/>
<ellipse cx="157.5" cy="165" rx="2.6" ry="1.6" fill="#6a3a30" filter="url(#f1)"/>
<ellipse cx="146" cy="164.5" rx="2.2" ry="1.4" fill="#7a463a" filter="url(#f1)"/>
<!-- hand bottom-left -->
<ellipse cx="22" cy="284" rx="36" ry="16" fill="#c89a92" filter="url(#f2)"/>
</svg>
</div>

</body>
</html>
